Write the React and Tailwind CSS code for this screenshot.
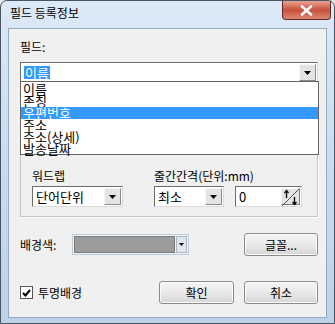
import React from 'react';

const font = { fontFamily: '"Noto Sans CJK KR", "Liberation Sans", sans-serif' };

const Arrow = () => (
  <svg width="7" height="4" viewBox="0 0 7 4">
    <path d="M0 0h7L3.5 4z" fill="#000" />
  </svg>
);

const DropBtn = () => (
  <div className="w-[17px] h-full flex items-center justify-center bg-[#e4e4e4] border-l border-t border-l-[#f8f8f8] border-t-[#f8f8f8] border-r border-b border-r-[#8a8a8a] border-b-[#8a8a8a]">
    <Arrow />
  </div>
);

const Combo = ({ value, className = '' }) => (
  <div className={`flex h-[21px] bg-white border border-t-[#6d6d6d] border-l-[#6d6d6d] border-b-[#dadada] border-r-[#dadada] p-px ${className}`}>
    <div className="flex-1 flex items-center pl-[2px] text-[13px] leading-none">{value}</div>
    <DropBtn />
  </div>
);

const Button = ({ children, className = '' }) => (
  <button className={`h-[23px] rounded-[3px] border border-[#8c8c8c] bg-gradient-to-b from-[#f4f4f4] via-[#e9e9e9] to-[#d6d6d6] text-[12px] text-black shadow-[inset_0_0_0_1px_#fbfbfb] ${className}`}>
    {children}
  </button>
);

const items = ['이름', '존칭', '우편번호', '주소', '주소(상세)', '발송날짜'];

export default function App() {
  return (
    <div className="w-[335px] h-[324px] bg-[#eaeaea]" style={font}>
      <div className="w-full h-full flex flex-col rounded-t-[7px] border border-[#4a5563] bg-gradient-to-b from-[#dce9f7] via-[#c9dcf0] to-[#bcd2ea] px-[7px] pb-[5px]">
        <div className="h-[27px] flex items-start justify-between">
          <span className="pl-[2px] pt-[6px] text-[12px] text-black leading-none">필드 등록정보</span>
          <div className="w-[49px] h-[19px] mr-[-4px] rounded-b-[4px] border border-t-0 border-[#5c2a2a] bg-gradient-to-b from-[#e8a394] via-[#c94e3c] to-[#d9876f] flex items-center justify-center">
            <svg width="13" height="11" viewBox="0 0 13 11">
              <path d="M2 1.5l9 8M11 1.5l-9 8" stroke="#fff" strokeWidth="2.6" strokeLinecap="round" />
            </svg>
          </div>
        </div>
        <div className="relative flex-1 flex flex-col bg-[#f0f0f0] border border-[#97a9bd] pl-[11px] pr-[8px] pt-[10px]">
          <div className="h-[16px] text-[12px] leading-[16px]">필드:</div>
          <Combo
            className="mt-[7px] h-[19px]"
            value={<span className="bg-[#3399ff] text-white px-px leading-[13px]">이름</span>}
          />
          <div className="mt-[18px] h-[116px] border border-[#c5c5c5] shadow-[1px_1px_0_#fff] flex flex-col justify-end pl-[11px] pb-[9px]">
            <div className="flex gap-[31px]">
              <div className="flex flex-col w-[91px]">
                <span className="text-[12px] leading-[16px] mb-[2px]">워드랩</span>
                <Combo value="단어단위" />
              </div>
              <div className="flex flex-col">
                <span className="text-[12px] leading-[16px] mb-[2px] whitespace-nowrap">줄간간격(단위:mm)</span>
                <div className="flex gap-[11px]">
                  <Combo value="최소" className="w-[70px]" />
                  <div className="w-[67px] h-[21px] flex bg-white border border-t-[#6d6d6d] border-l-[#6d6d6d] border-b-[#dadada] border-r-[#dadada] p-px">
                    <div className="flex-1 flex items-center pl-[2px] text-[13px] leading-none">0</div>
                    <div className="w-[19px] h-full bg-[#e4e4e4] border border-t-[#f8f8f8] border-l-[#f8f8f8] border-r-[#7a7a7a] border-b-[#7a7a7a]">
                      <svg width="17" height="17" viewBox="0 0 17 17">
                        <path d="M0 17L17 0" stroke="#555" strokeWidth="1" />
                        <path d="M4.5 9V2M2.5 4l2-2.5 2 2.5" stroke="#000" strokeWidth="1.3" fill="none" />
                        <path d="M12.5 8v7M10.5 13l2 2.5 2-2.5" stroke="#000" strokeWidth="1.3" fill="none" />
                      </svg>
                    </div>
                  </div>
                </div>
              </div>
            </div>
          </div>
          <div className="mt-[16px] flex items-center">
            <span className="w-[52px] text-[12px]">배경색:</span>
            <div className="w-[117px] h-[21px] flex border border-[#c0cbd8] bg-[#eef3f8] p-px">
              <div className="flex-1 bg-[#9c9c9c] border border-[#7c7c7c]" />
              <div className="w-[11px] ml-px flex items-center justify-center bg-[#dfe6ee] border border-[#a9b6c5]">
                <svg width="5" height="3" viewBox="0 0 5 3"><path d="M0 0h5L2.5 3z" fill="#000" /></svg>
              </div>
            </div>
            <Button className="ml-auto w-[74px]">글꼴...</Button>
          </div>
          <div className="mt-[25px] flex items-center">
            <div className="w-[13px] h-[13px] bg-white border border-[#555] flex items-center justify-center">
              <svg width="9" height="8" viewBox="0 0 9 8"><path d="M1 4l2.5 2.5L8 1" stroke="#000" strokeWidth="2" fill="none" /></svg>
            </div>
            <span className="ml-[5px] text-[12px]">투명배경</span>
            <Button className="ml-auto w-[75px]">확인</Button>
            <Button className="ml-[10px] w-[74px]">취소</Button>
          </div>
          <div className="absolute left-[11px] top-[52px] w-[299px] h-[74px] bg-white border border-[#646464] flex flex-col py-px">
            {items.map((t, i) => (
              <div
                key={t}
                className={`h-[12px] text-[13px] leading-[12px] pl-[2px] ${i === 2 ? 'bg-[#3399ff] text-white' : 'text-black'}`}
              >
                {t}
              </div>
            ))}
          </div>
        </div>
      </div>
    </div>
  );
}
